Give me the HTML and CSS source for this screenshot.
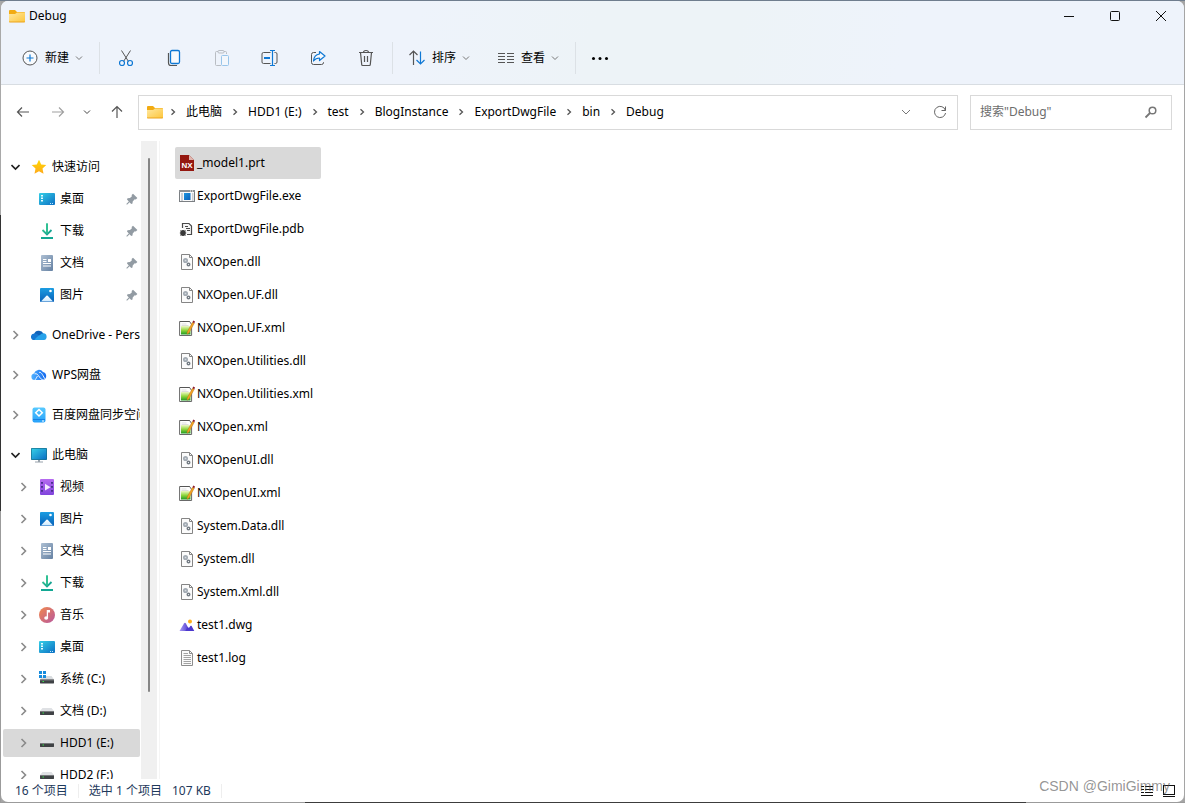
FILE: index.html
```html
<!DOCTYPE html>
<html lang="zh-CN">
<head>
<meta charset="utf-8">
<meta name="viewport" content="width=device-width, initial-scale=1">
<title>Debug</title>
<link rel="stylesheet" href="styles.css">
</head>
<body>
<svg class="defs" aria-hidden="true">
  <defs>
    <linearGradient id="g-folder" x1="0" y1="0" x2="1" y2="1"><stop offset="0" stop-color="#ffe8a0"/><stop offset="1" stop-color="#fdc63c"/></linearGradient>
    <linearGradient id="g-star" x1="0" y1="0" x2="0" y2="1"><stop offset="0" stop-color="#ffd900"/><stop offset="1" stop-color="#ffa91e"/></linearGradient>
    <linearGradient id="g-desk" x1="0" y1="0" x2="1" y2="1"><stop offset="0" stop-color="#35cfe6"/><stop offset="1" stop-color="#0b6fc4"/></linearGradient>
    <linearGradient id="g-down" x1="0" y1="0" x2="1" y2="1"><stop offset="0" stop-color="#43cf95"/><stop offset="1" stop-color="#0c9a92"/></linearGradient>
    <linearGradient id="g-doc" x1="0" y1="0" x2="1" y2="1"><stop offset="0" stop-color="#adbfd3"/><stop offset="1" stop-color="#6581a3"/></linearGradient>
    <linearGradient id="g-pic" x1="0" y1="0" x2="0" y2="1"><stop offset="0" stop-color="#1b9de2"/><stop offset="1" stop-color="#0860b8"/></linearGradient>
    <linearGradient id="g-snow" x1="0" y1="0" x2="0" y2="1"><stop offset="0" stop-color="#fff"/><stop offset="1" stop-color="#cdeaff"/></linearGradient>
    <linearGradient id="g-wps" x1="0" y1="0" x2="1" y2="0"><stop offset="0" stop-color="#4fb0ff"/><stop offset="1" stop-color="#1368ee"/></linearGradient>
    <linearGradient id="g-bd" x1="0" y1="0" x2="0" y2="1"><stop offset="0" stop-color="#57c9ff"/><stop offset="1" stop-color="#26a0fa"/></linearGradient>
    <linearGradient id="g-video" x1="0" y1="0" x2="0" y2="1"><stop offset="0" stop-color="#b66bf0"/><stop offset="1" stop-color="#8044dc"/></linearGradient>
    <linearGradient id="g-music" x1="0" y1="0" x2="1" y2="1"><stop offset="0" stop-color="#f28a4c"/><stop offset="1" stop-color="#b7579e"/></linearGradient>
    <linearGradient id="g-green" x1="0" y1="0" x2="0" y2="1"><stop offset="0" stop-color="#eef8c4"/><stop offset=".5" stop-color="#8fd63c"/><stop offset="1" stop-color="#1f9a22"/></linearGradient>
    <linearGradient id="g-exe" x1="0" y1="0" x2="1" y2="1"><stop offset="0" stop-color="#1b95e0"/><stop offset="1" stop-color="#0a5fb8"/></linearGradient>
    <linearGradient id="g-dwg" x1="0" y1="0" x2="1" y2="0"><stop offset="0" stop-color="#a99af5"/><stop offset="1" stop-color="#4530c8"/></linearGradient>
  </defs>
  <symbol id="folder" viewBox="0 0 16 16"><path d="M0 3a1 1 0 0 1 1-1h5l2 2h7a1 1 0 0 1 1 1v3H0z" fill="#f2ab12"/><path d="M0 6h6l2-1.500h7.500a.5.5 0 0 1 .5.5v8.500a.5.5 0 0 1-.5.5H.5a.5.5 0 0 1-.5-.5z" fill="url(#g-folder)"/><path d="M0 13.500h16v.3a.7.7 0 0 1-.7.7H.7a.7.7 0 0 1-.7-.7z" fill="#eba41d"/></symbol>
  <symbol id="chev-d" viewBox="0 0 8 8"><path d="M1 2.500l3 3 3-3" fill="none" stroke="currentColor"/></symbol>
  <symbol id="tree-r" viewBox="0 0 9 10"><path d="M2.500 1L6.500 5 2.500 9" fill="none" stroke="#8a8a8a" stroke-width="1.600"/></symbol>
  <symbol id="tree-d" viewBox="0 0 9 10"><path d="M.5 3l4 4 4-4" fill="none" stroke="#222" stroke-width="1.600"/></symbol>
  <symbol id="crumb" viewBox="0 0 6 8"><path d="M1.500 1.200L4.500 4 1.500 6.800" fill="none" stroke="#555" stroke-width="1.300"/></symbol>
  <symbol id="star" viewBox="0 0 16 16"><path d="M8 .8l2.200 4.700 5.100.6-3.800 3.500 1 5.200L8 12.300l-4.500 2.500 1-5.200L.7 6.100l5.100-.6z" fill="url(#g-star)"/></symbol>
  <symbol id="desk" viewBox="0 0 16 16"><rect y="2" width="16" height="12" rx="1" fill="url(#g-desk)"/><path d="M2 4h2v1.500H2zM2 6.500h2V8H2zM2 9h2v1.500H2z" fill="#e8fbff"/><path d="M11 12h1v1h-1zM13 12h1v1h-1z" fill="#bfe6ff"/></symbol>
  <symbol id="down" viewBox="0 0 16 16"><path d="M8 .5v11M3.500 7L8 11.500 12.500 7" fill="none" stroke="url(#g-down)" stroke-width="1.800"/><path d="M7.100.5h1.800v10H7.100z" fill="#2fc093"/><path d="M2 14h12v2H2z" fill="#12a893"/></symbol>
  <symbol id="doc" viewBox="0 0 16 16"><rect x="2" width="12" height="16" rx="1" fill="url(#g-doc)"/><path d="M4 4.500h3.500M4 6.500h3.500M4 8.500h8M4 11h8" stroke="#fff"/><path d="M9 4h3v3H9z" fill="#fff"/></symbol>
  <symbol id="pic" viewBox="0 0 16 16"><rect x="1" y="1" width="14" height="14" rx="1" fill="url(#g-pic)"/><path d="M2 14.500l5.400-5.700a1 1 0 0 1 1.300 0l5.300 5.700z" fill="url(#g-snow)"/><circle cx="11.500" cy="4" r="1.300" fill="#fff"/></symbol>
  <symbol id="pin" viewBox="0 0 12 12"><path d="M7 .8L11.400 5 9.800 6.400 8.700 6.200 6.700 8.400 6.500 10.600 5.200 11 3.600 9.300 1 11.700.3 11 2.800 8.400 1 6.600 1.500 5.200 4 5.100 5.900 3.200 5.600 2.100z" fill="#929ba3"/></symbol>
  <symbol id="onedrive" viewBox="0 0 16 16"><path d="M3 7.500a5 4.800 0 0 1 9.400-1l-3 4z" fill="#0f62b8"/><path d="M3.500 13A3.400 3.200 0 0 1 3.300 6.500C5 6.200 6.700 7.200 8 8.500l5 4.500z" fill="#1477d1"/><path d="M9 8a4 4 0 0 1 3.400-1.700A3.400 3.400 0 0 1 13 13H3.500C5 10.500 7 9 9 8z" fill="#27a2ea"/></symbol>
  <symbol id="wps" viewBox="0 0 16 16"><path d="M3.300 13A3.300 3.300 0 0 1 3 6.500a5 4.800 0 0 1 9-1.500 4.200 4.200 0 0 1 .5 8z" fill="url(#g-wps)"/><path d="M3.500 6.800c2.800-.4 3.300.8 5 3.300s3.300 3 4.500 2.900M6.500 9C5.500 10.500 4.800 12.300 3.800 13M8 5.500c2-.8 3 1.200 5.800 6.300" fill="none" stroke="#fff" stroke-width=".9"/></symbol>
  <symbol id="baidu" viewBox="0 0 16 16"><rect x="1.500" y=".5" width="13" height="15" rx="2" fill="url(#g-bd)"/><path d="M2 12.500h12" stroke="#1681e4"/><path d="M8 2.500l3.300 3.200L8 9 4.700 5.700z" fill="none" stroke="#fff" stroke-width="1.500"/><path d="M11 13.500h2v1h-2z" fill="#fff"/></symbol>
  <symbol id="pc" viewBox="0 0 16 16"><rect y="1" width="16" height="12" rx=".8" fill="#16708d"/><rect x=".7" y="1.700" width="14.600" height="10.600" fill="url(#g-desk)"/><path d="M7 13h2v1.500h3v1H4v-1h3z" fill="#98a2ab"/></symbol>
  <symbol id="video" viewBox="0 0 16 16"><rect x="1" width="14" height="16" rx="1" fill="url(#g-video)"/><path d="M2 3h2v1.800H2zM2 7h2v1.800H2zM2 11h2v1.800H2zM12 3h2v1.800h-2zM12 7h2v1.800h-2zM12 11h2v1.800h-2z" fill="#49308d"/><path d="M6 4.800l5.500 3.400L6 11.500z" fill="#f5eaff"/></symbol>
  <symbol id="music" viewBox="0 0 16 16"><circle cx="8" cy="8" r="8" fill="url(#g-music)"/><path d="M8.400 3v8" stroke="#fff" stroke-width="1.300"/><path d="M8 3h3v2.500H8z" fill="#fff"/><ellipse cx="7.200" cy="11" rx="2" ry="1.700" fill="#fff"/></symbol>
  <symbol id="drive" viewBox="0 0 16 16"><path d="M3.500 5h9L15 8H1z" fill="#dfe1e4"/><rect x="1" y="8" width="14" height="4" rx=".4" fill="#3f4245"/><path d="M1 8h14v1H1z" fill="#77797c"/><path d="M3.500 9.500h1.500v1H3.500z" fill="#39e04c"/></symbol>
  <symbol id="sysdrive" viewBox="0 0 16 16"><path d="M4 5h8.500L15 8.500H1z" fill="#d9dcdf"/><rect x="1" y="8.500" width="14" height="4" rx=".4" fill="#3f4245"/><path d="M1 8.500h14v1H1z" fill="#77797c"/><path d="M3.500 10h1.500v1H3.500z" fill="#39e04c"/><path d="M0 0h3v3H0zM4 0h3v3H4zM0 4h3v3H0zM4 4h3v3H4z" fill="#168cdd"/></symbol>
  <symbol id="f-nx" viewBox="0 0 16 16"><path d="M1 0h9l5 5v11H1z" fill="#94170f"/><path d="M10 0l5 5h-5z" fill="#dfb5ae"/><text x="8" y="13" text-anchor="middle" class="nx">NX</text></symbol>
  <symbol id="f-exe" viewBox="0 0 16 16"><rect x=".5" y="2.500" width="15" height="11" fill="#fafafa" stroke="#7b7f83"/><path d="M0 2h16v2H0z" fill="#8b8f93"/><path d="M11 3h1M13 3h1" stroke="#fff"/><rect x="5" y="5" width="6.500" height="7" fill="url(#g-exe)"/><path d="M2 6h2M2 8h2M2 10h2M2 12h2M13 6h1.500M13 8h1.500M13 10h1.500M13 12h1.500" stroke="#9aa4ad"/></symbol>
  <symbol id="f-pdb" viewBox="0 0 16 16"><path d="M3.500 7v-4.500h6.500l2.500 2.500v8.500H8" fill="#f6f6f6" stroke="#4a4a4a" stroke-width="1.200"/><path d="M6 5.500h3M7 7.500h4M8 9.500h3" stroke="#4a4a4a"/><ellipse cx="4" cy="12" rx="2.700" ry="3" fill="#3a3a3a"/><path d="M1.200 9.500l5.600 5M6.800 9.500l-5.600 5M.8 12h6.400" stroke="#3a3a3a" stroke-width=".8"/></symbol>
  <symbol id="f-dll" viewBox="0 0 16 16"><path d="M2.500.5h8l3 3v12h-11z" fill="#fbfbfb" stroke="#858585"/><path d="M10.500.5v3h3" fill="none" stroke="#858585"/><circle cx="6.500" cy="6.500" r="1.700" fill="#d7dbe0" stroke="#a3abb3" stroke-width="1.700"/><circle cx="9.500" cy="10.500" r="1.300" fill="#fff" stroke="#747c84" stroke-width="1.400"/></symbol>
  <symbol id="f-xml" viewBox="0 0 16 16"><path d="M.6 1.500h10l2 3v11H.6z" fill="#fff" stroke="#686868"/><path d="M1.500 1.500h9" stroke="#444" stroke-dasharray="1 1"/><path d="M2.500 4h5M2.500 5.500h7" stroke="#d0d0d0" stroke-width=".7"/><rect x="2" y="6" width="9.500" height="8.500" fill="url(#g-green)"/><path d="M13.500 2.200l1.800 1L10 13l-2 1.300.2-2.300z" fill="#f3a321" stroke="#a86819" stroke-width=".4"/><path d="M13.500 2.200L14.300.6l1.700.8-.7 1.800z" fill="#8d1c2c"/></symbol>
  <symbol id="f-dwg" viewBox="0 0 16 16"><path d="M.5 14L5 6.500c.6-.9 1.300-.9 1.900 0L11 14z" fill="url(#g-dwg)"/><path d="M6.300 14l2.400-4 1.200 1 1.500-2c.4-.5.9-.4 1.200 0L15.300 14z" fill="#4c38cd"/><circle cx="11" cy="4.500" r="2" fill="#ffae18"/></symbol>
  <symbol id="f-log" viewBox="0 0 16 16"><path d="M2.500.5h8l3 3v12h-11z" fill="#fbfbfb" stroke="#8d8d8d"/><path d="M10.500.5v3h3" fill="none" stroke="#8d8d8d"/><path d="M4.500 3.500H9M4.500 5.500h7.500M4.500 7.500h7.500M4.500 9.500h7.500M4.500 11.500h7.500M4.500 13.500h7.500" stroke="#a3a3a3"/></symbol>
</svg>

<div class="window">
  <header class="head">
    <div class="titlebar">
      <svg class="i16"><use href="#folder"/></svg>
      <h1 class="title">Debug</h1>
      <div class="caption">
        <button type="button" aria-label="最小化"><svg class="i12" viewBox="0 0 12 12"><path d="M1 6.500h10" stroke="#111"/></svg></button>
        <button type="button" aria-label="最大化"><svg class="i12" viewBox="0 0 12 12"><rect x="1.500" y="1.500" width="9" height="9" rx="1" fill="none" stroke="#111"/></svg></button>
        <button type="button" aria-label="关闭"><svg class="i12" viewBox="0 0 12 12"><path d="M1 1l10 10M11 1L1 11" stroke="#111"/></svg></button>
      </div>
    </div>
    <div class="toolbar">
      <button type="button" class="tool"><svg class="i18" viewBox="0 0 18 18"><circle cx="9" cy="9" r="7" fill="#f8fafd" stroke="#555"/><path d="M9 5.500v7M5.500 9h7" stroke="#0f78d4" stroke-width="1.200"/></svg><span>新建</span><svg class="i8"><use href="#chev-d"/></svg></button>
      <span class="sep"></span>
      <div class="icons">
        <button type="button" aria-label="剪切"><svg class="i18" viewBox="0 0 18 18"><path d="M4.500 1.500l7 11M13.500 1.500l-7 11" fill="none" stroke="#555"/><circle cx="5" cy="14" r="2.500" fill="none" stroke="#0f78d4" stroke-width="1.200"/><circle cx="13" cy="14" r="2.500" fill="none" stroke="#0f78d4" stroke-width="1.200"/></svg></button>
        <button type="button" aria-label="复制"><svg class="i18" viewBox="0 0 18 18"><path d="M3.500 4v10a2.500 2.500 0 0 0 2.500 2.500h6" fill="none" stroke="#555" stroke-width="1.200"/><rect x="5.500" y="1.500" width="9" height="13" rx="1.500" fill="#f8fafd" stroke="#0f78d4" stroke-width="1.300"/></svg></button>
        <button type="button" aria-label="粘贴" disabled><svg class="i18" viewBox="0 0 18 18"><path d="M8 16.500H3.500a1 1 0 0 1-1-1v-12a1 1 0 0 1 1-1H5M11 2.500h1.500a1 1 0 0 1 1 1V5" fill="none" stroke="#b9bdc3"/><rect x="5" y="1.500" width="6" height="2.500" rx="1" fill="none" stroke="#b9bdc3"/><rect x="8.500" y="6.500" width="7" height="10" rx="1" fill="#f3f7fc" stroke="#98c5ea"/></svg></button>
        <button type="button" aria-label="重命名"><svg class="i18" viewBox="0 0 18 18"><path d="M9.500 3.500h-7a1.500 1.500 0 0 0-1.500 1.500v8a1.500 1.500 0 0 0 1.500 1.500h7M13.500 3.500h1a1.500 1.500 0 0 1 1.500 1.500v8a1.500 1.500 0 0 1-1.500 1.500h-1" fill="none" stroke="#555"/><path d="M3 9h6" stroke="#0f78d4" stroke-width="1.800"/><path d="M11.500 2v14.500M9 1.500h5M9 16.500h5" stroke="#0f78d4" stroke-width="1.200"/></svg></button>
        <button type="button" aria-label="共享"><svg class="i18" viewBox="0 0 18 18"><path d="M7 3.500H4.500a2 2 0 0 0-2 2v8a2 2 0 0 0 2 2h8a2 2 0 0 0 2-2V13" fill="none" stroke="#555"/><path d="M10.500 2.500l5.500 4.500-5.500 4.500V9c-3 0-4.500 1-6 3 .3-4 2.500-6.500 6-7z" fill="#f8fafd" stroke="#0f78d4" stroke-width="1.200" stroke-linejoin="round"/></svg></button>
        <button type="button" aria-label="删除"><svg class="i18" viewBox="0 0 18 18"><path d="M2 3.500h14M6.500 3.500a2.500 2 0 0 1 5 0M3.500 3.500l1.200 12a1 1 0 0 0 1 1h6.600a1 1 0 0 0 1-1l1.200-12M7.500 7v6M10.500 7v6" fill="none" stroke="#555" stroke-width="1.200"/></svg></button>
      </div>
      <span class="sep"></span>
      <button type="button" class="tool"><svg class="i18" viewBox="0 0 18 18"><path d="M5.500 16V2M1.500 6l4-4 4 4" fill="none" stroke="#555" stroke-width="1.200"/><path d="M12.500 2.500V15M8.500 11l4 4 4-4" fill="none" stroke="#0f78d4" stroke-width="1.200"/></svg><span>排序</span><svg class="i8"><use href="#chev-d"/></svg></button>
      <button type="button" class="tool"><svg class="i18" viewBox="0 0 18 18"><path d="M1 4.500h7M1 7.500h7M1 10.500h7M1 13.500h7M10 4.500h7M10 7.500h7M10 10.500h7M10 13.500h7" stroke="#555"/></svg><span>查看</span><svg class="i8"><use href="#chev-d"/></svg></button>
      <span class="sep"></span>
      <button type="button" class="more" aria-label="查看更多"><svg class="i18" viewBox="0 0 18 18"><circle cx="2.500" cy="9.500" r="1.500"/><circle cx="9" cy="9.500" r="1.500"/><circle cx="15.500" cy="9.500" r="1.500"/></svg></button>
    </div>
  </header>

  <div class="navrow">
    <div class="nav">
      <button type="button" aria-label="返回"><svg class="i14" viewBox="0 0 14 14"><path d="M13 7H1.500M6 2.500L1.500 7 6 11.500" fill="none" stroke="#555" stroke-width="1.200"/></svg></button>
      <button type="button" aria-label="前进"><svg class="i14" viewBox="0 0 14 14"><path d="M1 7h11.500M8 2.500L12.500 7 8 11.500" fill="none" stroke="#a0a0a0" stroke-width="1.200"/></svg></button>
      <button type="button" class="recent" aria-label="最近浏览的位置"><svg class="i8"><use href="#chev-d"/></svg></button>
      <button type="button" aria-label="向上"><svg class="i14" viewBox="0 0 14 14"><path d="M7 13V1.500M2 6.500l5-5 5 5" fill="none" stroke="#555" stroke-width="1.200"/></svg></button>
    </div>
    <nav class="address" aria-label="地址">
      <svg class="i16"><use href="#folder"/></svg>
      <svg class="crumb"><use href="#crumb"/></svg>
      <a href="#">此电脑</a><svg class="crumb"><use href="#crumb"/></svg>
      <a href="#">HDD1 (E:)</a><svg class="crumb"><use href="#crumb"/></svg>
      <a href="#">test</a><svg class="crumb"><use href="#crumb"/></svg>
      <a href="#">BlogInstance</a><svg class="crumb"><use href="#crumb"/></svg>
      <a href="#">ExportDwgFile</a><svg class="crumb"><use href="#crumb"/></svg>
      <a href="#">bin</a><svg class="crumb"><use href="#crumb"/></svg>
      <a href="#">Debug</a>
      <div class="address-end">
        <button type="button" aria-label="以前的位置"><svg class="i10" viewBox="0 0 10 10"><path d="M1 3l4 4 4-4" fill="none" stroke="#777"/></svg></button>
        <button type="button" aria-label="刷新"><svg class="i14" viewBox="0 0 14 14"><path d="M12.500 5.500A5.600 5.600 0 1 0 12.600 8M12.500 1.500v4h-4" fill="none" stroke="#666"/></svg></button>
      </div>
    </nav>
    <label class="search">
      <input type="text" aria-label="搜索" placeholder='搜索"Debug"'>
      <svg class="i14" viewBox="0 0 14 14"><circle cx="8.500" cy="5.500" r="3.300" fill="none" stroke="#777" stroke-width="1.500"/><path d="M6 8l-4.500 4.500" stroke="#777" stroke-width="1.800"/></svg>
    </label>
  </div>

  <div class="body">
    <nav class="tree" aria-label="导航窗格">
      <ul>
        <li><a href="#"><svg class="tc"><use href="#tree-d"/></svg><svg class="i16"><use href="#star"/></svg>快速访问</a></li>
        <li class="sub"><a href="#"><span class="tc"></span><svg class="i16"><use href="#desk"/></svg>桌面<svg class="pin"><use href="#pin"/></svg></a></li>
        <li class="sub"><a href="#"><span class="tc"></span><svg class="i16"><use href="#down"/></svg>下载<svg class="pin"><use href="#pin"/></svg></a></li>
        <li class="sub"><a href="#"><span class="tc"></span><svg class="i16"><use href="#doc"/></svg>文档<svg class="pin"><use href="#pin"/></svg></a></li>
        <li class="sub"><a href="#"><span class="tc"></span><svg class="i16"><use href="#pic"/></svg>图片<svg class="pin"><use href="#pin"/></svg></a></li>
        <li class="root"><a href="#"><svg class="tc"><use href="#tree-r"/></svg><svg class="i16"><use href="#onedrive"/></svg>OneDrive - Personal</a></li>
        <li class="root"><a href="#"><svg class="tc"><use href="#tree-r"/></svg><svg class="i16"><use href="#wps"/></svg>WPS网盘</a></li>
        <li class="root"><a href="#"><svg class="tc"><use href="#tree-r"/></svg><svg class="i16"><use href="#baidu"/></svg>百度网盘同步空间</a></li>
        <li class="root"><a href="#"><svg class="tc"><use href="#tree-d"/></svg><svg class="i16"><use href="#pc"/></svg>此电脑</a></li>
        <li class="sub"><a href="#"><svg class="tc"><use href="#tree-r"/></svg><svg class="i16"><use href="#video"/></svg>视频</a></li>
        <li class="sub"><a href="#"><svg class="tc"><use href="#tree-r"/></svg><svg class="i16"><use href="#pic"/></svg>图片</a></li>
        <li class="sub"><a href="#"><svg class="tc"><use href="#tree-r"/></svg><svg class="i16"><use href="#doc"/></svg>文档</a></li>
        <li class="sub"><a href="#"><svg class="tc"><use href="#tree-r"/></svg><svg class="i16"><use href="#down"/></svg>下载</a></li>
        <li class="sub"><a href="#"><svg class="tc"><use href="#tree-r"/></svg><svg class="i16"><use href="#music"/></svg>音乐</a></li>
        <li class="sub"><a href="#"><svg class="tc"><use href="#tree-r"/></svg><svg class="i16"><use href="#desk"/></svg>桌面</a></li>
        <li class="sub"><a href="#"><svg class="tc"><use href="#tree-r"/></svg><svg class="i16"><use href="#sysdrive"/></svg>系统 (C:)</a></li>
        <li class="sub"><a href="#"><svg class="tc"><use href="#tree-r"/></svg><svg class="i16"><use href="#drive"/></svg>文档 (D:)</a></li>
        <li class="sub"><a href="#" class="on"><svg class="tc"><use href="#tree-r"/></svg><svg class="i16"><use href="#drive"/></svg>HDD1 (E:)</a></li>
        <li class="sub"><a href="#"><svg class="tc"><use href="#tree-r"/></svg><svg class="i16"><use href="#drive"/></svg>HDD2 (F:)</a></li>
      </ul>
    </nav>
    <div class="track"><div class="thumb"></div></div>
    <main class="files">
      <ul>
        <li class="on"><svg class="i16"><use href="#f-nx"/></svg>_model1.prt</li>
        <li><svg class="i16"><use href="#f-exe"/></svg>ExportDwgFile.exe</li>
        <li><svg class="i16"><use href="#f-pdb"/></svg>ExportDwgFile.pdb</li>
        <li><svg class="i16"><use href="#f-dll"/></svg>NXOpen.dll</li>
        <li><svg class="i16"><use href="#f-dll"/></svg>NXOpen.UF.dll</li>
        <li><svg class="i16"><use href="#f-xml"/></svg>NXOpen.UF.xml</li>
        <li><svg class="i16"><use href="#f-dll"/></svg>NXOpen.Utilities.dll</li>
        <li><svg class="i16"><use href="#f-xml"/></svg>NXOpen.Utilities.xml</li>
        <li><svg class="i16"><use href="#f-xml"/></svg>NXOpen.xml</li>
        <li><svg class="i16"><use href="#f-dll"/></svg>NXOpenUI.dll</li>
        <li><svg class="i16"><use href="#f-xml"/></svg>NXOpenUI.xml</li>
        <li><svg class="i16"><use href="#f-dll"/></svg>System.Data.dll</li>
        <li><svg class="i16"><use href="#f-dll"/></svg>System.dll</li>
        <li><svg class="i16"><use href="#f-dll"/></svg>System.Xml.dll</li>
        <li><svg class="i16"><use href="#f-dwg"/></svg>test1.dwg</li>
        <li><svg class="i16"><use href="#f-log"/></svg>test1.log</li>
      </ul>
    </main>
  </div>

  <footer class="status">
    <span>16 个项目</span><i class="bar"></i>
    <span>选中 1 个项目</span><span>107 KB</span><i class="bar"></i>
    <div class="views">
      <button type="button" aria-label="详细信息"><svg class="i14" viewBox="0 0 14 14"><path d="M1 2.500h3M5 2.500h8M1 5.500h3M5 5.500h8M1 8.500h3M5 8.500h8M1 11.500h12" stroke="#111"/></svg></button>
      <button type="button" aria-label="大图标"><svg class="i14" viewBox="0 0 14 14"><rect x="1.500" y="1.500" width="11" height="9" fill="none" stroke="#111"/><path d="M1 12.500h12" stroke="#111"/></svg></button>
    </div>
  </footer>
  <div class="watermark">CSDN @GimiGimmy</div>
</div>
</body>
</html>
```

FILE: styles.css
```css
* { box-sizing: border-box; }
body {
  margin: 0;
  height: 100vh;
  padding: 1px;
  overflow: hidden;
  font: 12px/16px "Noto Sans", "Noto Sans CJK SC", sans-serif;
  color: #000;
  background:
    linear-gradient(#6f7d8e, #6f7d8e) top / 100% 1px no-repeat,
    linear-gradient(90deg, #9b9b9b 305px, #3c3c3c 305px, #3c3c3c 1026px, #9b9b9b 1026px) bottom / 100% 1px no-repeat,
    linear-gradient(#a9a9a9 215px, #333 215px, #333 511px, #9b9b9b 511px) left / 1px 100% no-repeat,
    #a5a5a5;
}
button {
  border: 0;
  padding: 0;
  background: none;
  font: inherit;
  color: inherit;
  display: flex;
  align-items: center;
  justify-content: center;
}
a { color: inherit; text-decoration: none; }
ul { list-style: none; margin: 0; padding: 0; }
svg { display: block; flex: none; }
.defs { position: absolute; width: 0; height: 0; }
.nx { font: 700 8px "Liberation Sans", sans-serif; fill: #fff; }
.i8 { width: 8px; height: 8px; color: #777; }
.i10 { width: 10px; height: 10px; }
.i12 { width: 12px; height: 12px; }
.i14 { width: 14px; height: 14px; }
.i16 { width: 16px; height: 16px; }
.i18 { width: 18px; height: 18px; }

.window {
  position: relative;
  height: 100%;
  display: flex;
  flex-direction: column;
  background: #fff;
  border-radius: 7px;
  overflow: hidden;
}

/* Title bar and command bar */
.head {
  background: linear-gradient(100deg, #eef3fb 35%, #edf3f7 50%, #edf3f7 62%, #eef3fb 76%);
  border-bottom: 1px solid #d8dde2;
}
.titlebar { display: flex; align-items: center; height: 29px; padding-left: 8px; gap: 4px; }
.title { margin: 0; font-size: 12px; font-weight: 400; }
.caption { display: flex; margin-left: auto; }
.caption button { width: 46px; height: 28px; }
.toolbar { display: flex; align-items: center; height: 54px; padding: 2px 0 0 15px; }
.tool { height: 32px; padding: 0 16px 0 5px; gap: 6px; }
.tool + .tool { padding-left: 11px; }
.sep { width: 1px; height: 32px; background: #dce1e6; }
.icons { display: flex; padding: 0 2px; }
.icons button { width: 48px; height: 32px; }
.sep + .tool { padding-left: 15px; }
.more { width: 48px; height: 32px; }

/* Address row */
.navrow { display: flex; align-items: center; height: 56px; padding: 0 12px 2px 0; }
.nav { display: flex; align-items: center; width: 137px; padding-left: 4px; }
.nav button { width: 35px; height: 32px; }
.nav .recent { width: 24px; }
.nav .recent .i8 { color: #444; }
.address {
  flex: 1;
  display: flex;
  align-items: center;
  gap: 10px;
  height: 35px;
  padding-left: 8px;
  border: 1px solid #d9d9d9;
}
.crumb { width: 6px; height: 8px; }
.address .i16 + .crumb { margin-left: -3px; }
.address-end { display: flex; margin-left: auto; }
.address-end button { width: 34px; height: 32px; }
.search {
  flex: none;
  display: flex;
  align-items: center;
  width: 202px;
  height: 35px;
  margin-left: 12px;
  padding: 0 13px 0 9px;
  border: 1px solid #d9d9d9;
}
.search input { flex: 1; min-width: 0; padding: 0; border: 0; outline: 0; background: none; font: inherit; }
.search input::placeholder { color: #6d6d6d; opacity: 1; }

/* Navigation pane and file list */
.body { flex: 1; min-height: 0; display: flex; }
.tree { width: 139px; padding: 12px 0 0 2px; overflow: hidden; }
.tree ul { display: flex; flex-direction: column; gap: 4px; }
.tree a {
  display: flex;
  align-items: center;
  height: 28px;
  padding: 0 2px 0 8px;
  border-radius: 2px;
  white-space: nowrap;
}
.tree .sub a { padding-left: 16px; }
.tree .root { margin-top: 8px; }
.tree .i16 { margin: 0 5px 0 11px; }
.tc { flex: none; width: 9px; height: 10px; }
.pin { width: 12px; height: 12px; margin-left: auto; }
.tree .on, .files .on { background: #d9d9d9; }
.track { flex: none; width: 16px; margin-left: 1px; padding-top: 17px; background: #f0f0f0; }
.thumb { width: 2px; height: 86%; margin-left: 7px; border-radius: 1px; background: #868686; }
.files { flex: 1; margin-left: 2px; padding: 6px 15px; border-left: 1px solid #f5f5f5; }
.files ul { display: flex; flex-direction: column; align-items: flex-start; gap: 1px; }
.files li { display: flex; align-items: center; gap: 2px; min-width: 146px; height: 32px; padding: 0 4px; border-radius: 2px; }

/* Status bar */
.status { display: flex; align-items: center; height: 23px; padding: 0 8px 0 14px; gap: 10px; color: #1e395b; }
.bar { width: 1px; height: 14px; background: #eee; }
.views { display: flex; gap: 8px; margin-left: auto; }
.watermark {
  position: absolute;
  right: 14px;
  bottom: 8px;
  color: rgba(90, 90, 90, .65);
  font: 14px/16px "Liberation Sans", sans-serif;
  pointer-events: none;
}
```
